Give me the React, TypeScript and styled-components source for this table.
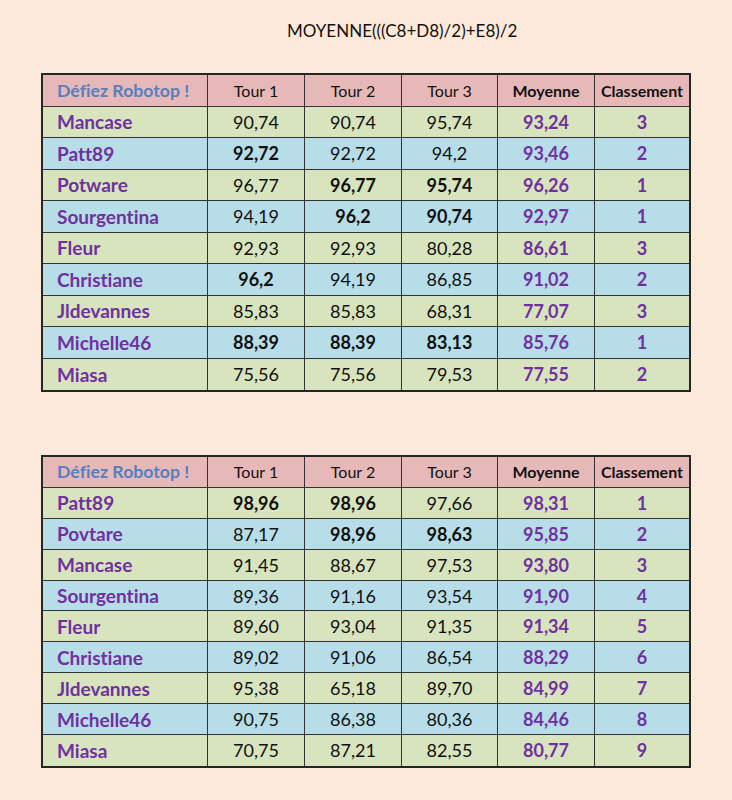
import React from "react";
import styled, { createGlobalStyle } from "styled-components";

const Global = createGlobalStyle`
  html, body { margin: 0; padding: 0; background: #fde9d9; }
  body {
    font-family: Lato, "Open Sans", sans-serif;
    color: #111;
    font-variant-ligatures: none;
    font-feature-settings: "liga" 0, "clig" 0;
  }
`;

const Page = styled.div`
  width: 732px;
  min-height: 800px;
  background: #fde9d9;
  padding: 19px 0 0 41px;
  box-sizing: border-box;
  display: flex;
  flex-direction: column;
`;

const Title = styled.div`
  font-size: 17px;
  line-height: 24px;
  margin-left: 246px;
  color: #111;
  height: 54px;
`;

const Table = styled.div<{ $row: number }>`
  width: 650px;
  box-sizing: border-box;
  border: 2px solid #262626;
  display: grid;
  grid-template-columns: 164px 97px 97px 96px 97px 95px;
  grid-auto-rows: ${(p) => p.$row}px;
`;

const Spacer = styled.div`
  height: 63px;
`;

type Tone = "head" | "green" | "blue";
const bg: Record<Tone, string> = {
  head: "#e6b9b8",
  green: "#d8e4bd",
  blue: "#b7dee8",
};

const Cell = styled.div<{ $tone: Tone; $first?: boolean; $last?: boolean }>`
  background: ${(p) => bg[p.$tone]};
  border-left: ${(p) => (p.$first ? "none" : "1px solid #333")};
  border-bottom: ${(p) => (p.$last ? "none" : "1px solid #333")};
  display: flex;
  align-items: center;
  justify-content: center;
  font-size: 18px;
  color: #111;
  white-space: nowrap;
`;

const NameCell = styled(Cell)`
  justify-content: flex-start;
  padding-left: 14px;
  font-size: 19px;
  font-weight: 700;
  color: #7030a0;
`;

const HeadName = styled(NameCell)`
  color: #5580c0;
  font-size: 17.7px;
`;

const HeadLabel = styled(Cell)<{ $bold?: boolean }>`
  font-size: 16px;
  font-weight: ${(p) => (p.$bold ? 700 : 400)};
`;

const Num = styled(Cell)<{ $bold?: boolean }>`
  font-weight: ${(p) => (p.$bold ? 700 : 400)};
`;

const Purple = styled(Cell)`
  color: #7030a0;
  font-weight: 700;
`;

type Row = {
  name: string;
  t: [string, string, string];
  b?: [boolean, boolean, boolean];
  avg: string;
  rank: string;
};

const table1: Row[] = [
  { name: "Mancase", t: ["90,74", "90,74", "95,74"], avg: "93,24", rank: "3" },
  { name: "Patt89", t: ["92,72", "92,72", "94,2"], b: [true, false, false], avg: "93,46", rank: "2" },
  { name: "Potware", t: ["96,77", "96,77", "95,74"], b: [false, true, true], avg: "96,26", rank: "1" },
  { name: "Sourgentina", t: ["94,19", "96,2", "90,74"], b: [false, true, true], avg: "92,97", rank: "1" },
  { name: "Fleur", t: ["92,93", "92,93", "80,28"], avg: "86,61", rank: "3" },
  { name: "Christiane", t: ["96,2", "94,19", "86,85"], b: [true, false, false], avg: "91,02", rank: "2" },
  { name: "Jldevannes", t: ["85,83", "85,83", "68,31"], avg: "77,07", rank: "3" },
  { name: "Michelle46", t: ["88,39", "88,39", "83,13"], b: [true, true, true], avg: "85,76", rank: "1" },
  { name: "Miasa", t: ["75,56", "75,56", "79,53"], avg: "77,55", rank: "2" },
];

const table2: Row[] = [
  { name: "Patt89", t: ["98,96", "98,96", "97,66"], b: [true, true, false], avg: "98,31", rank: "1" },
  { name: "Povtare", t: ["87,17", "98,96", "98,63"], b: [false, true, true], avg: "95,85", rank: "2" },
  { name: "Mancase", t: ["91,45", "88,67", "97,53"], avg: "93,80", rank: "3" },
  { name: "Sourgentina", t: ["89,36", "91,16", "93,54"], avg: "91,90", rank: "4" },
  { name: "Fleur", t: ["89,60", "93,04", "91,35"], avg: "91,34", rank: "5" },
  { name: "Christiane", t: ["89,02", "91,06", "86,54"], avg: "88,29", rank: "6" },
  { name: "Jldevannes", t: ["95,38", "65,18", "89,70"], avg: "84,99", rank: "7" },
  { name: "Michelle46", t: ["90,75", "86,38", "80,36"], avg: "84,46", rank: "8" },
  { name: "Miasa", t: ["70,75", "87,21", "82,55"], avg: "80,77", rank: "9" },
];

function Scores({ rows, rowHeight }: { rows: Row[]; rowHeight: number }) {
  return (
    <Table $row={rowHeight}>
      <HeadName $tone="head" $first>Défiez Robotop !</HeadName>
      <HeadLabel $tone="head">Tour 1</HeadLabel>
      <HeadLabel $tone="head">Tour 2</HeadLabel>
      <HeadLabel $tone="head">Tour 3</HeadLabel>
      <HeadLabel $tone="head" $bold>Moyenne</HeadLabel>
      <HeadLabel $tone="head" $bold>Classement</HeadLabel>
      {rows.map((r, i) => {
        const tone: Tone = i % 2 === 0 ? "green" : "blue";
        const last = i === rows.length - 1;
        return (
          <React.Fragment key={r.name + i}>
            <NameCell $tone={tone} $first $last={last}>{r.name}</NameCell>
            {r.t.map((v, j) => (
              <Num key={j} $tone={tone} $last={last} $bold={r.b?.[j]}>{v}</Num>
            ))}
            <Purple $tone={tone} $last={last}>{r.avg}</Purple>
            <Purple $tone={tone} $last={last}>{r.rank}</Purple>
          </React.Fragment>
        );
      })}
    </Table>
  );
}

export default function App() {
  return (
    <>
      <Global />
      <Page>
        <Title>MOYENNE(((C8+D8)/2)+E8)/2</Title>
        <Scores rows={table1} rowHeight={31.5} />
        <Spacer />
        <Scores rows={table2} rowHeight={30.9} />
      </Page>
    </>
  );
}
